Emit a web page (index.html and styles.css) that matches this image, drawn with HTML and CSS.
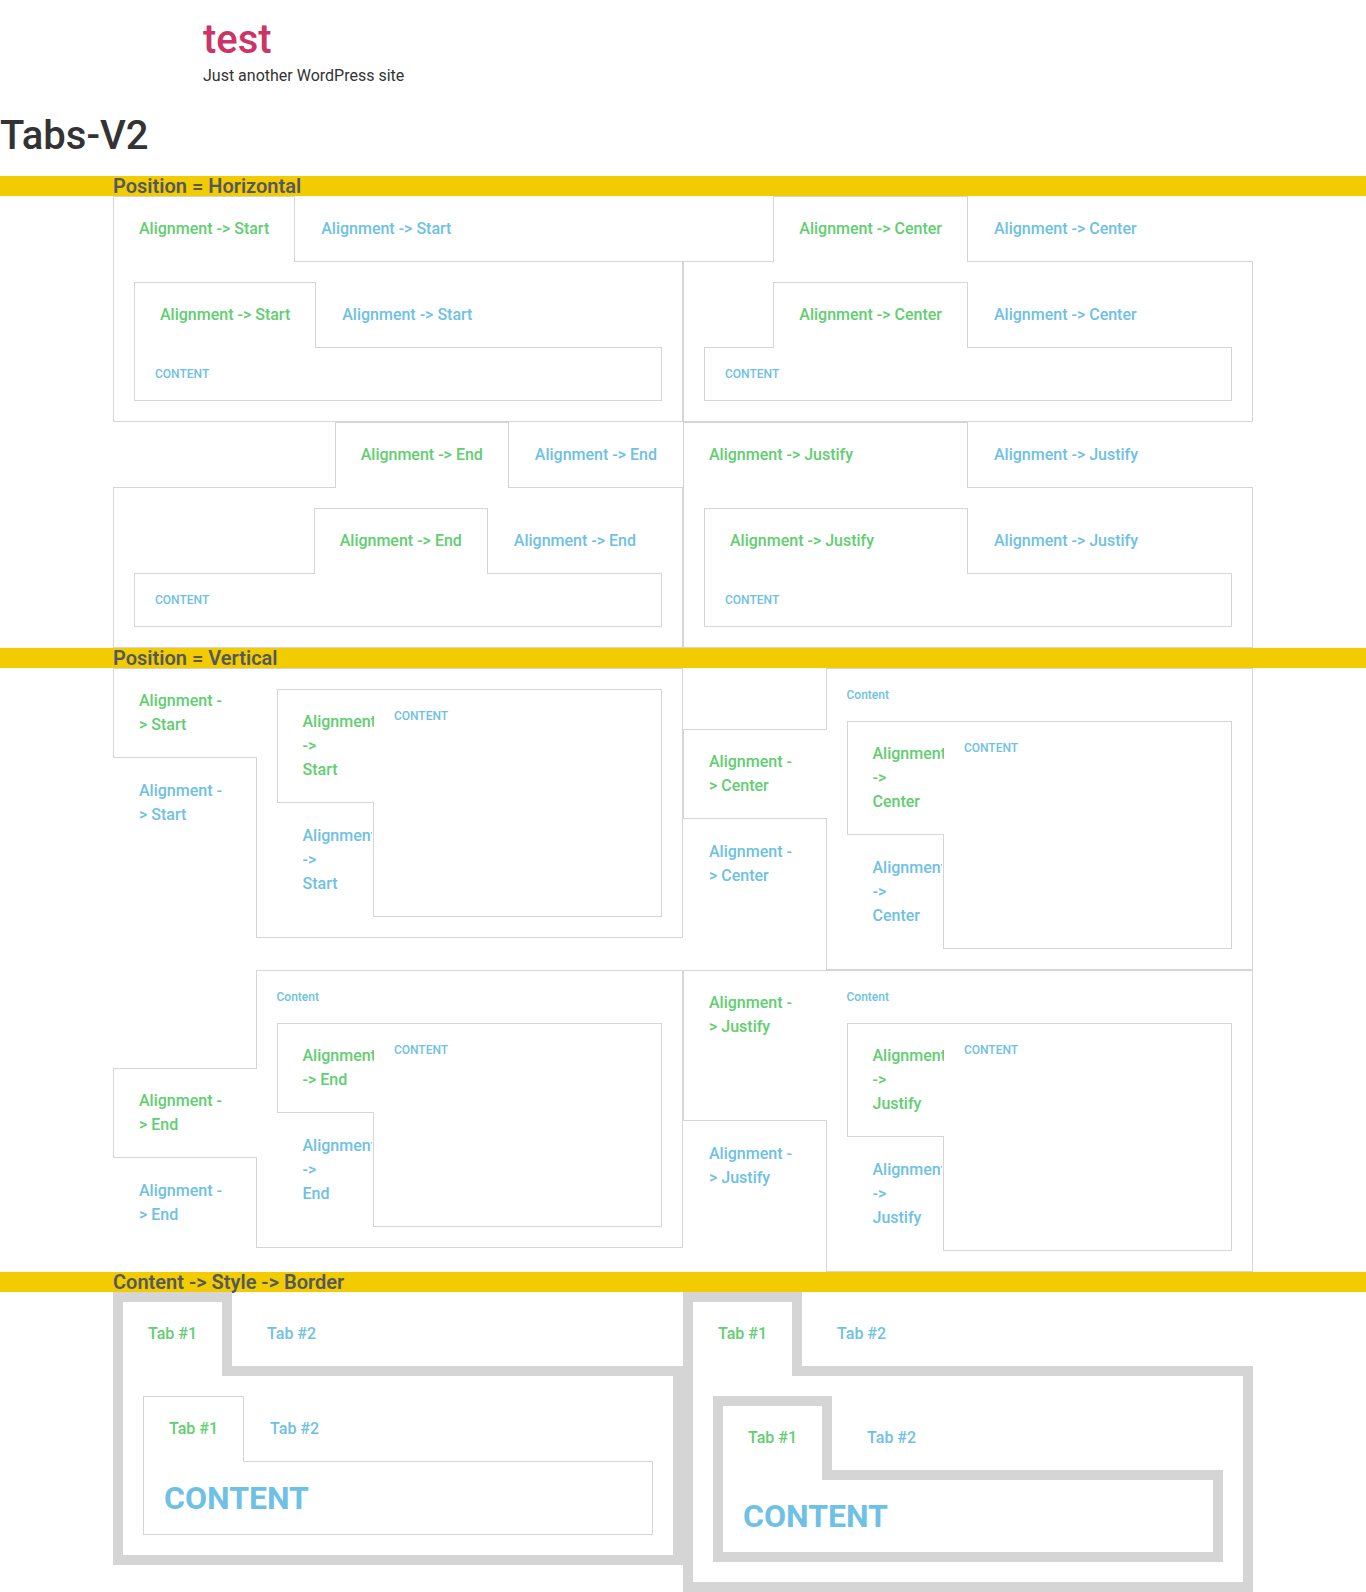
FILE: index.html
```html
<!DOCTYPE html>
<html lang="en">
<head>
<meta charset="utf-8">
<title>Tabs-V2 – test</title>
<link rel="stylesheet" href="styles.css">
</head>
<body>
<header class="site-header">
  <h1 class="site-title"><a href="#">test</a></h1>
  <p class="site-description">Just another WordPress site</p>
</header>
<main class="page">
  <h1 class="page-title">Tabs-V2</h1>

  <section class="demo">
    <div class="band"><h2 class="band-title">Position = Horizontal</h2></div>
    <div class="grid">
      <div class="tabs h start">
        <div class="tabs-head">
          <div class="tab active">Alignment -&gt; Start</div>
          <div class="tab">Alignment -&gt; Start</div>
        </div>
        <div class="tabs-panel">
          <div class="tabs h start">
            <div class="tabs-head">
              <div class="tab active">Alignment -&gt; Start</div>
              <div class="tab">Alignment -&gt; Start</div>
            </div>
            <div class="tabs-panel"><p class="cap">CONTENT</p></div>
          </div>
        </div>
      </div>

      <div class="tabs h center">
        <div class="tabs-head">
          <div class="tab active">Alignment -&gt; Center</div>
          <div class="tab">Alignment -&gt; Center</div>
        </div>
        <div class="tabs-panel">
          <div class="tabs h center">
            <div class="tabs-head">
              <div class="tab active">Alignment -&gt; Center</div>
              <div class="tab">Alignment -&gt; Center</div>
            </div>
            <div class="tabs-panel"><p class="cap">CONTENT</p></div>
          </div>
        </div>
      </div>

      <div class="tabs h end">
        <div class="tabs-head">
          <div class="tab active">Alignment -&gt; End</div>
          <div class="tab">Alignment -&gt; End</div>
        </div>
        <div class="tabs-panel">
          <div class="tabs h end">
            <div class="tabs-head">
              <div class="tab active">Alignment -&gt; End</div>
              <div class="tab">Alignment -&gt; End</div>
            </div>
            <div class="tabs-panel"><p class="cap">CONTENT</p></div>
          </div>
        </div>
      </div>

      <div class="tabs h justify">
        <div class="tabs-head">
          <div class="tab active">Alignment -&gt; Justify</div>
          <div class="tab">Alignment -&gt; Justify</div>
        </div>
        <div class="tabs-panel">
          <div class="tabs h justify">
            <div class="tabs-head">
              <div class="tab active">Alignment -&gt; Justify</div>
              <div class="tab">Alignment -&gt; Justify</div>
            </div>
            <div class="tabs-panel"><p class="cap">CONTENT</p></div>
          </div>
        </div>
      </div>
    </div>
  </section>

  <section class="demo">
    <div class="band"><h2 class="band-title">Position = Vertical</h2></div>
    <div class="grid">
      <div class="tabs v start">
        <div class="tabs-head">
          <div class="tab active">Alignment -&gt; Start</div>
          <div class="tab">Alignment -&gt; Start</div>
        </div>
        <div class="tabs-panel">
          <div class="tabs v start">
            <div class="tabs-head">
              <div class="tab active">Alignment -&gt; Start</div>
              <div class="tab">Alignment -&gt; Start</div>
            </div>
            <div class="tabs-panel"><p class="cap">CONTENT</p></div>
          </div>
        </div>
      </div>

      <div class="tabs v center">
        <div class="tabs-head">
          <div class="tab active">Alignment -&gt; Center</div>
          <div class="tab">Alignment -&gt; Center</div>
        </div>
        <div class="tabs-panel">
          <p class="cap">Content</p>
          <div class="tabs v center">
            <div class="tabs-head">
              <div class="tab active">Alignment -&gt; Center</div>
              <div class="tab">Alignment -&gt; Center</div>
            </div>
            <div class="tabs-panel"><p class="cap">CONTENT</p></div>
          </div>
        </div>
      </div>

      <div class="tabs v end">
        <div class="tabs-head">
          <div class="tab active">Alignment -&gt; End</div>
          <div class="tab">Alignment -&gt; End</div>
        </div>
        <div class="tabs-panel">
          <p class="cap">Content</p>
          <div class="tabs v end">
            <div class="tabs-head">
              <div class="tab active">Alignment -&gt; End</div>
              <div class="tab">Alignment -&gt; End</div>
            </div>
            <div class="tabs-panel"><p class="cap">CONTENT</p></div>
          </div>
        </div>
      </div>

      <div class="tabs v justify">
        <div class="tabs-head">
          <div class="tab active">Alignment -&gt; Justify</div>
          <div class="tab">Alignment -&gt; Justify</div>
        </div>
        <div class="tabs-panel">
          <p class="cap">Content</p>
          <div class="tabs v justify">
            <div class="tabs-head">
              <div class="tab active">Alignment -&gt; Justify</div>
              <div class="tab">Alignment -&gt; Justify</div>
            </div>
            <div class="tabs-panel"><p class="cap">CONTENT</p></div>
          </div>
        </div>
      </div>
    </div>
  </section>

  <section class="demo">
    <div class="band"><h2 class="band-title">Content -&gt; Style -&gt; Border</h2></div>
    <div class="grid">
      <div class="tabs h start thick">
        <div class="tabs-head">
          <div class="tab active">Tab #1</div>
          <div class="tab">Tab #2</div>
        </div>
        <div class="tabs-panel">
          <div class="tabs h start">
            <div class="tabs-head">
              <div class="tab active">Tab #1</div>
              <div class="tab">Tab #2</div>
            </div>
            <div class="tabs-panel"><p class="big">CONTENT</p></div>
          </div>
        </div>
      </div>

      <div class="tabs h start thick">
        <div class="tabs-head">
          <div class="tab active">Tab #1</div>
          <div class="tab">Tab #2</div>
        </div>
        <div class="tabs-panel">
          <div class="tabs h start thick">
            <div class="tabs-head">
              <div class="tab active">Tab #1</div>
              <div class="tab">Tab #2</div>
            </div>
            <div class="tabs-panel"><p class="big">CONTENT</p></div>
          </div>
        </div>
      </div>
    </div>
  </section>
</main>
</body>
</html>
```

FILE: styles.css
```css
html, body {
  margin: 0;
  padding: 0;
  background: #fff;
}

body {
  font-family: Roboto, "Liberation Sans", Arial, sans-serif;
  color: #333;
  font-size: 16px;
  line-height: 1.5;
}

/* ---------- site header ---------- */
.site-header {
  max-width: 960px;
  margin: 0 auto;
  padding: 16px 0;
}

.site-title {
  margin: 0;
  font-size: 40px;
  font-weight: 500;
  line-height: 48px;
}

.site-title a {
  color: #cc3366;
  text-decoration: none;
}

.site-description {
  margin: 0;
  font-size: 16px;
  line-height: 24px;
  color: #333;
}

.page-title {
  margin: 8px 0 16px;
  font-size: 40px;
  font-weight: 500;
  line-height: 48px;
  color: #333;
}

/* ---------- section band ---------- */
.band {
  background: #f2cc00;
}

.band-title {
  width: 1140px;
  margin: 0 auto;
  font-size: 20px;
  font-weight: 600;
  line-height: 20px;
  color: #54595f;
}

.grid {
  width: 1140px;
  margin: 0 auto;
  display: grid;
  grid-template-columns: 1fr 1fr;
  align-items: start;
}

/* ---------- tabs widget ---------- */
.tabs {
  display: flex;
  flex-direction: column;
  min-width: 0;
}

.tabs-head {
  display: flex;
}

.tab {
  flex: 0 0 auto;
  font-size: 16px;
  font-weight: 500;
  line-height: 24px;
  color: #6ec1e4;
  padding: 20px 25px;
  border: 1px solid transparent;
  border-bottom-width: 0;
  white-space: nowrap;
  overflow: hidden;
}

.tab.active {
  color: #61ce70;
  border-color: #d5d5d5;
  background: #fff;
  padding-bottom: 21px;
  margin-bottom: -1px;
  position: relative;
  z-index: 1;
}

.center > .tabs-head {
  justify-content: center;
}

.end > .tabs-head {
  justify-content: flex-end;
}

.h.justify > .tabs-head > .tab {
  flex: 1 1 0;
}

.tabs-panel {
  flex: 1 1 auto;
  min-width: 0;
  display: flex;
  flex-direction: column;
  gap: 20px;
  border: 1px solid #d5d5d5;
  padding: 20px;
  background: #fff;
}

/* vertical */
.tabs.v {
  flex-direction: row;
  align-items: stretch;
}

.v > .tabs-head {
  flex: 0 0 25%;
  width: 25%;
  flex-direction: column;
}

.v > .tabs-head > .tab {
  white-space: normal;
  border: 1px solid transparent;
  padding: 20px 25px;
  margin: 0;
}

.v > .tabs-head > .tab.active {
  border-color: #d5d5d5;
  border-right-width: 0;
  padding: 20px 26.5px 20px 25px;
  margin: 0 -1px 0 0;
}

.v.justify > .tabs-head > .tab {
  flex: 1 0 auto;
}

/* thick border style */
.thick > .tabs-head > .tab {
  border-width: 10px;
  border-bottom-width: 0;
}

.thick > .tabs-head > .tab.active {
  padding-bottom: 30px;
  margin-bottom: -10px;
}

.thick > .tabs-panel {
  border-width: 10px;
}

/* content texts */
.cap {
  margin: 0;
  font-size: 12px;
  font-weight: 500;
  line-height: 12px;
  color: #6ec1e4;
}

.big {
  margin: 0;
  font-size: 32px;
  font-weight: 700;
  line-height: 32px;
  color: #6ec1e4;
}
```
